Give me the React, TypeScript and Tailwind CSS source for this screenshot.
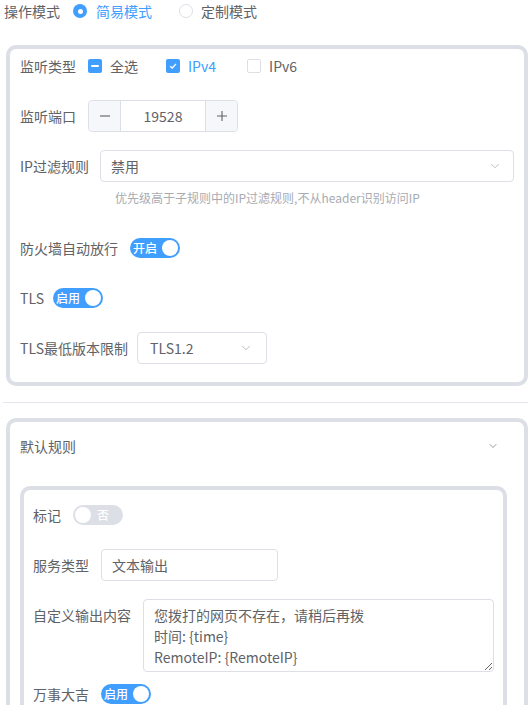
import { ChevronDown } from "lucide-react";

const font = { fontFamily: '"Noto Sans CJK SC", "Noto Sans", sans-serif' };

const Check = ({ state }: { state: "on" | "off" | "half" }) => {
  if (state === "off") {
    return <span className="block w-[14px] h-[14px] rounded-[2px] border border-[#dcdfe6] bg-white shrink-0" />;
  }
  return (
    <span className="w-[14px] h-[14px] rounded-[2px] bg-[#409eff] shrink-0 flex items-center justify-center">
      {state === "half" ? (
        <span className="block w-[8px] h-[2px] bg-white rounded-[1px]" />
      ) : (
        <svg width="10" height="10" viewBox="0 0 10 10">
          <path d="M2.2 5.2 L4.2 7.1 L7.9 3" fill="none" stroke="white" strokeWidth="1.4" />
        </svg>
      )}
    </span>
  );
};

const Radio = ({ on }: { on?: boolean }) =>
  on ? (
    <span className="w-[14px] h-[14px] rounded-full bg-[#409eff] flex items-center justify-center shrink-0">
      <span className="block w-[5px] h-[5px] rounded-full bg-white" />
    </span>
  ) : (
    <span className="block w-[14px] h-[14px] rounded-full border border-[#dcdfe6] bg-white shrink-0" />
  );

const Switch = ({ on, text }: { on: boolean; text: string }) =>
  on ? (
    <div className="w-[50px] h-5 rounded-full bg-[#409eff] flex items-center pl-[3px] pr-[2px] shrink-0">
      <span className="text-[12px] leading-none text-white font-medium">{text}</span>
      <span className="block ml-auto w-4 h-4 rounded-full bg-white" />
    </div>
  ) : (
    <div className="w-[50px] h-5 rounded-full bg-[#dcdfe6] flex items-center pl-[2px] pr-[14px] shrink-0">
      <span className="block w-4 h-4 rounded-full bg-white" />
      <span className="ml-auto text-[12px] leading-none text-white font-medium">{text}</span>
    </div>
  );

const Arrow = () => (
  <ChevronDown className="w-[14px] h-[14px] text-[#a8abb2]" strokeWidth={1.3} />
);

const Row = ({
  label,
  children,
  className = "",
  labelClass = "",
}: {
  label: string;
  children: React.ReactNode;
  className?: string;
  labelClass?: string;
}) => (
  <div className={`flex items-center h-8 gap-3 ${className}`}>
    <span className={`shrink-0 whitespace-nowrap ${labelClass}`}>{label}</span>
    {children}
  </div>
);

export default function App() {
  return (
    <div style={font} className="w-[531px] h-[705px] overflow-hidden bg-white text-[14px] text-[#606266]">
      <div className="h-[22px] pl-1 flex items-center">
        <span>操作模式</span>
        <span className="ml-[13px]"><Radio on /></span>
        <span className="ml-[9px] text-[#409eff]">简易模式</span>
        <span className="ml-[27px]"><Radio /></span>
        <span className="ml-[8px]">定制模式</span>
      </div>

      <div className="mt-[23px] ml-[6px] mr-[3px] border-4 border-[#dcdfe6] rounded-[10px] px-[10px] pt-px pb-[18px]">
        <Row label="监听类型">
          <div className="flex items-center">
            <Check state="half" />
            <span className="ml-2">全选</span>
            <span className="ml-[28px]"><Check state="on" /></span>
            <span className="ml-2 text-[#409eff]">IPv4</span>
            <span className="ml-[31px]"><Check state="off" /></span>
            <span className="ml-2">IPv6</span>
          </div>
        </Row>
        <Row label="监听端口" className="mt-[18px]">
          <div className="w-[150px] h-8 border border-[#dcdfe6] rounded flex">
            <div className="w-8 bg-[#f5f7fa] border-r border-[#dcdfe6] rounded-l flex items-center justify-center">
              <svg width="12" height="12" viewBox="0 0 12 12"><path d="M1 6 H11" stroke="#606266" strokeWidth="1.1" /></svg>
            </div>
            <div className="flex-1 flex items-center justify-center">19528</div>
            <div className="w-8 bg-[#f5f7fa] border-l border-[#dcdfe6] rounded-r flex items-center justify-center">
              <svg width="12" height="12" viewBox="0 0 12 12"><path d="M1 6 H11 M6 1 V11" stroke="#606266" strokeWidth="1.1" /></svg>
            </div>
          </div>
        </Row>
        <Row label="IP过滤规则" className="mt-[18px]" labelClass="w-[68px]">
          <div className="flex-1 h-8 border border-[#dcdfe6] rounded flex items-center pl-[10px] pr-[11px]">
            <span>禁用</span>
            <span className="ml-auto"><Arrow /></span>
          </div>
        </Row>
        <div className="h-8 flex items-center pl-[95px] text-[12px] text-[#a8abb2]">
          优先级高于子规则中的IP过滤规则,不从header识别访问IP
        </div>
        <Row label="防火墙自动放行" className="mt-[18px]">
          <Switch on text="开启" />
        </Row>
        <Row label="TLS" className="mt-[18px]" labelClass="w-[21px]">
          <Switch on text="启用" />
        </Row>
        <Row label="TLS最低版本限制" className="mt-[18px]" labelClass="w-[105px]">
          <div className="w-[130px] h-8 border border-[#dcdfe6] rounded flex items-center pl-[12px] pr-[13px]">
            <span>TLS1.2</span>
            <span className="ml-auto"><Arrow /></span>
          </div>
        </Row>
      </div>

      <div className="mt-4 mx-[3px] h-px bg-[#e4e7ed]" />

      <div className="mt-[15px] ml-[6px] mr-[3px] border-4 border-b-0 border-[#dcdfe6] rounded-t-[10px] pl-[10px] pr-[17px] pb-10">
        <div className="h-12 flex items-center">
          <span>默认规则</span>
          <span className="ml-auto mr-[8px]">
            <ChevronDown className="w-[12px] h-[12px] text-[#606266]" strokeWidth={1.3} />
          </span>
        </div>
        <div className="mt-4 border-4 border-b-0 border-[#dcdfe6] rounded-t-[10px] pl-[9px] pt-[9px] pr-[9px] pb-10">
          <Row label="标记">
            <Switch on={false} text="否" />
          </Row>
          <Row label="服务类型" className="mt-[18px]">
            <div className="w-[177px] h-8 border border-[#dcdfe6] rounded flex items-center pl-[10px]">
              文本输出
            </div>
          </Row>
          <div className="mt-[18px] flex gap-3">
            <span className="leading-8 shrink-0">自定义输出内容</span>
            <textarea
              readOnly
              className="w-[353px] h-[73px] border border-[#dcdfe6] rounded px-[10px] py-[5px] leading-[21px] text-[#606266] outline-none"
              style={font}
              defaultValue={"您拨打的网页不存在，请稍后再拨\n时间: {time}\nRemoteIP: {RemoteIP}"}
            />
          </div>
          <Row label="万事大吉" className="mt-[6px]">
            <Switch on text="启用" />
          </Row>
        </div>
      </div>
    </div>
  );
}
